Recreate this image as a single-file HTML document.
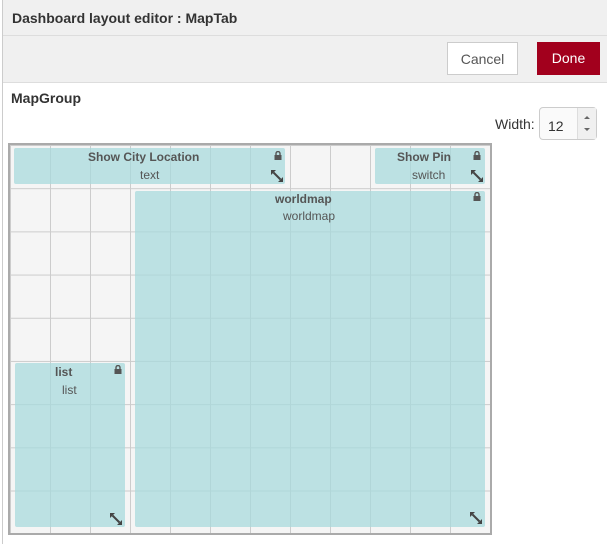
<!DOCTYPE html><html><head><style>
body{margin:0;width:607px;height:544px;background:#fff;font-family:"Liberation Sans",sans-serif;position:relative;overflow:hidden;color:#333}
.lb{position:absolute;left:2px;top:0;width:1px;height:544px;background:#ccc}
.hd{position:absolute;left:3px;top:0;width:604px;height:35px;background:#f0f0f0;border-bottom:1px solid #ddd}
.hd span{position:absolute;left:9px;top:10px;font-size:14px;font-weight:bold}
.tb{position:absolute;left:3px;top:36px;width:604px;height:46px;background:#f0f0f0;border-bottom:1px solid #ddd}
.btn{position:absolute;top:42px;height:33px;font-size:14px;text-align:center;line-height:33px;box-sizing:border-box}
.cancel{left:447px;width:71px;background:#fff;border:1px solid #ccc;color:#555}
.done{left:537px;width:63px;background:#a2001d;color:#fff}
.grp{position:absolute;left:11px;top:90px;font-size:14px;font-weight:bold}
.wl{position:absolute;left:495px;top:116px;font-size:14px}
.inp{position:absolute;left:539px;top:107px;width:58px;height:33px;box-sizing:border-box;border:1px solid #ccc;border-radius:4px;background:#fafafa;font-size:14px}
.inp span{position:absolute;left:8px;top:10px}
.inp .sp{position:absolute;right:0;top:0;width:18px;height:31px;border-left:1px solid #ddd;background:#f0f0f0}
.grid{position:absolute;left:8px;top:143px;width:480px;height:388px;border:2px solid #aaa;background-color:#f5f5f5;
background-image:linear-gradient(to right,#ccc 1px,transparent 1px),linear-gradient(to bottom,#ccc 1px,transparent 1px);
background-size:40px 43.2px;background-position:0 0}
.w{position:absolute;background:rgba(168,218,220,.75);border-radius:2px;font-size:12px;color:#555}
.w b{position:absolute;color:#555;font-size:12px}
.w i{position:absolute;font-style:normal}
.lk{position:absolute;width:8px;height:9px}
.rs{position:absolute;width:12px;height:12px}
</style></head><body>
<div class="lb"></div>
<div class="hd"><span>Dashboard layout editor : MapTab</span></div>
<div class="tb"></div>
<div class="btn cancel">Cancel</div>
<div class="btn done">Done</div>
<div class="grp">MapGroup</div>
<div class="wl">Width:</div>
<div class="inp"><span>12</span><div class="sp"><svg width="18" height="31"><path d="M6 11l3-3 3 3z M6 20l3 3 3-3z" fill="#666"/></svg></div></div>
<div class="grid">
<div class="w" style="left:4px;top:3px;width:271px;height:36px"><b style="left:74px;top:2px">Show City Location</b><i style="left:126px;top:20px">text</i>
<svg class="lk" style="left:260px;top:3px" viewBox="0 0 8 9"><path d="M2 4V2.5a2 2 0 014 0V4" stroke="#555" fill="none" stroke-width="1.4"/><rect x="0.5" y="4" width="7" height="5" fill="#555"/></svg>
<svg class="rs" style="left:257px;top:22px" viewBox="0 0 12 12"><path d="M2.5 2.5L9.5 9.5" stroke="#444" stroke-width="2"/><path d="M0 0h5L0 5zM12 12H7l5-5z" fill="#444"/></svg></div>
<div class="w" style="left:365px;top:3px;width:110px;height:36px"><b style="left:22px;top:2px">Show Pin</b><i style="left:37px;top:20px">switch</i>
<svg class="lk" style="left:98px;top:3px" viewBox="0 0 8 9"><path d="M2 4V2.5a2 2 0 014 0V4" stroke="#555" fill="none" stroke-width="1.4"/><rect x="0.5" y="4" width="7" height="5" fill="#555"/></svg>
<svg class="rs" style="left:96px;top:22px" viewBox="0 0 12 12"><path d="M2.5 2.5L9.5 9.5" stroke="#444" stroke-width="2"/><path d="M0 0h5L0 5zM12 12H7l5-5z" fill="#444"/></svg></div>
<div class="w" style="left:125px;top:46px;width:350px;height:336px"><b style="left:140px;top:1px">worldmap</b><i style="left:148px;top:18px">worldmap</i>
<svg class="lk" style="left:338px;top:1px" viewBox="0 0 8 9"><path d="M2 4V2.5a2 2 0 014 0V4" stroke="#555" fill="none" stroke-width="1.4"/><rect x="0.5" y="4" width="7" height="5" fill="#555"/></svg>
<svg class="rs" style="left:335px;top:321px" viewBox="0 0 12 12"><path d="M2.5 2.5L9.5 9.5" stroke="#444" stroke-width="2"/><path d="M0 0h5L0 5zM12 12H7l5-5z" fill="#444"/></svg></div>
<div class="w" style="left:5px;top:218px;width:110px;height:164px"><b style="left:40px;top:2px">list</b><i style="left:47px;top:20px">list</i>
<svg class="lk" style="left:99px;top:2px" viewBox="0 0 8 9"><path d="M2 4V2.5a2 2 0 014 0V4" stroke="#555" fill="none" stroke-width="1.4"/><rect x="0.5" y="4" width="7" height="5" fill="#555"/></svg>
<svg class="rs" style="left:95px;top:150px" viewBox="0 0 12 12"><path d="M2.5 2.5L9.5 9.5" stroke="#444" stroke-width="2"/><path d="M0 0h5L0 5zM12 12H7l5-5z" fill="#444"/></svg></div>
</div>
</body></html>
